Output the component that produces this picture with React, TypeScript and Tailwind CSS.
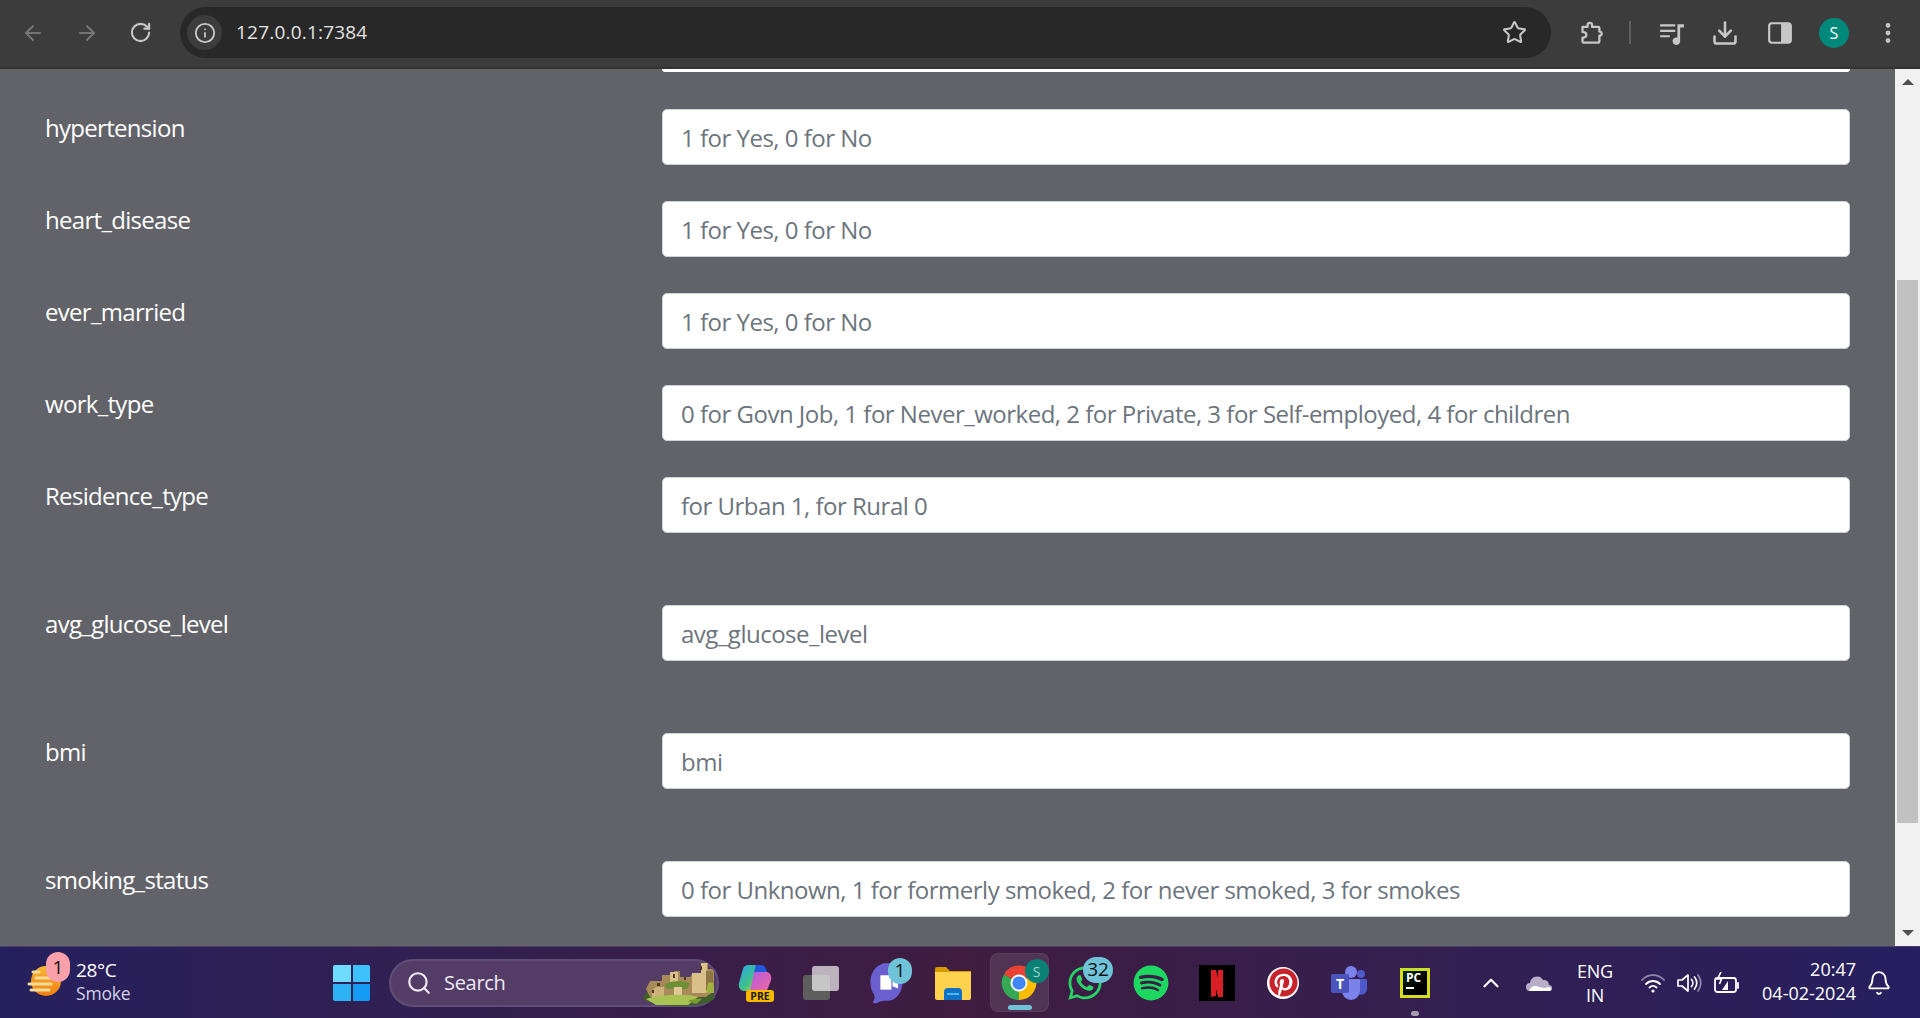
import { ArrowLeft, ArrowRight, RotateCw, Info, Star, Download, MoreVertical, Search, ChevronUp, Bell } from "lucide-react";
import { FaPinterest, FaSpotify, FaWhatsapp } from "react-icons/fa";

const rows = [
  { label: "hypertension", hint: "1 for Yes, 0 for No", gap: "mb-[36px]" },
  { label: "heart_disease", hint: "1 for Yes, 0 for No", gap: "mb-[36px]" },
  { label: "ever_married", hint: "1 for Yes, 0 for No", gap: "mb-[36px]" },
  { label: "work_type", hint: "0 for Govn Job, 1 for Never_worked, 2 for Private, 3 for Self-employed, 4 for children", gap: "mb-[36px]" },
  { label: "Residence_type", hint: "for Urban 1, for Rural 0", gap: "mb-[72px]" },
  { label: "avg_glucose_level", hint: "avg_glucose_level", gap: "mb-[72px]" },
  { label: "bmi", hint: "bmi", gap: "mb-[72px]" },
  { label: "smoking_status", hint: "0 for Unknown, 1 for formerly smoked, 2 for never smoked, 3 for smokes", gap: "" },
];

function Toolbar() {
  return (
    <div className="h-[69px] shrink-0 flex items-center pb-[2px] bg-[#3c3c3c] border-b-2 border-[#333333] text-[#c7c7c7] rounded-t-lg">
      <div className="w-[180px] shrink-0 flex items-center pl-[21px] gap-[30px]">
        <ArrowLeft className="w-6 h-6 text-[#757575]" strokeWidth={2} />
        <ArrowRight className="w-6 h-6 text-[#757575]" strokeWidth={2} />
        <RotateCw className="w-[23px] h-[23px]" strokeWidth={2.2} />
      </div>
      <div className="w-[1371px] h-[51px] shrink-0 rounded-full bg-[#282828] flex items-center pl-[7px] pr-[24px]">
        <div className="w-[35px] h-[35px] rounded-full bg-[#3c3c3c] flex items-center justify-center">
          <Info className="w-[22px] h-[22px]" strokeWidth={2} />
        </div>
        <span className="ml-[14px] text-[19px] text-[#e3e3e3] tracking-[0.2px]">127.0.0.1:7384</span>
        <Star className="w-[25px] h-[25px] ml-auto" strokeWidth={2} />
      </div>
      <div className="flex-1 flex items-center relative h-full">
        <svg viewBox="0 0 24 24" className="w-[27px] h-[27px] ml-[27px]" fill="none" stroke="currentColor" strokeWidth="2" strokeLinejoin="round">
          <path d="M4 7h4.5V5.5a2 2 0 0 1 4 0V7H18a1 1 0 0 1 1 1v3.2h.8a1.9 1.9 0 0 1 0 3.6H19V20a1 1 0 0 1-1 1H5a1 1 0 0 1-1-1v-3.5h1a2.4 2.4 0 0 0 0-4.8H4z" />
        </svg>
        <div className="w-[2px] h-[23px] bg-[#5f5f5f] ml-[24px]" />
        <svg viewBox="0 0 24 24" className="w-[26px] h-[26px] ml-[28px]" fill="currentColor">
          <path d="M1 4h14v2H1zM1 9h14v2H1zM1 14h9v2H1zM17 4h6v3h-3.5v12.5a3.5 3.5 0 1 1-2.5-3.3z" />
        </svg>
        <Download className="w-[28px] h-[28px] ml-[26px]" strokeWidth={2.2} />
        <svg viewBox="0 0 24 24" className="w-[26px] h-[26px] ml-[28px]" fill="none">
          <rect x="2" y="3" width="20" height="18" rx="2.5" stroke="currentColor" strokeWidth="2" />
          <path d="M13 3h7a2 2 0 0 1 2 2v14a2 2 0 0 1-2 2h-7z" fill="currentColor" />
        </svg>
        <div className="w-[30px] h-[30px] ml-[26px] rounded-full bg-[#00897b] flex items-center justify-center text-white text-[16px]">S</div>
        <MoreVertical className="w-[26px] h-[26px] ml-[26px]" strokeWidth={2.4} />
      </div>
    </div>
  );
}

function FormArea() {
  return (
    <div className="flex-1 bg-[#626369] overflow-hidden">
      <div className="ml-[662px] w-[1188px] h-[3px] bg-white rounded-b-[5px] mb-[37px]" />
      {rows.map((r) => (
        <div key={r.label} className={`flex ${r.gap}`}>
          <label className="w-[617px] ml-[45px] pt-[2px] text-[24px] leading-[34px] text-white tracking-[-0.7px] shrink-0">{r.label}</label>
          <div className="w-[1188px] h-[56px] bg-white rounded-[5px] border border-[#ced4da] flex items-center px-[18px] pt-[2px] text-[24px] text-[#6c757d] tracking-[-0.5px] whitespace-nowrap">
            {r.hint}
          </div>
        </div>
      ))}
    </div>
  );
}

function Scrollbar() {
  return (
    <div className="w-[25px] shrink-0 bg-[#f1f1f1] flex flex-col items-center">
      <div className="w-0 h-0 mt-[10px] border-x-[6px] border-x-transparent border-b-[6px] border-b-[#505050]" />
      <div className="w-[21px] h-[543px] mt-[195px] bg-[#c1c1c1]" />
      <div className="w-0 h-0 mt-[107px] border-x-[6px] border-x-transparent border-t-[6px] border-t-[#505050]" />
    </div>
  );
}

function Badge({ text, className }: { text: string; className: string }) {
  return <span className={`absolute flex items-center justify-center rounded-full text-[#111] text-[19px] ${className}`}>{text}</span>;
}

function Weather() {
  return (
    <div className="w-[333px] shrink-0 flex items-center h-full">
      <div className="relative w-[76px] h-full shrink-0">
        <svg viewBox="0 0 36 36" className="absolute left-[27px] top-[17px] w-[36px] h-[36px]">
          <defs>
            <linearGradient id="sun" x1="0" y1="0" x2="0" y2="1">
              <stop offset="0" stopColor="#f7b733" />
              <stop offset="1" stopColor="#ef7f10" />
            </linearGradient>
          </defs>
          <circle cx="19" cy="17" r="15" fill="url(#sun)" />
          <path d="M6 8h6M9 14h17M2 20h22M4 26h18" stroke="#f3dc9a" strokeWidth="3" strokeLinecap="round" />
        </svg>
        <Badge text="1" className="left-[46px] top-[5px] w-[24px] h-[30px] bg-[#f9a0aa]" />
      </div>
      <div className="flex flex-col leading-[23px] mb-[2px]">
        <span className="text-[19px] text-white tracking-[-0.4px]">28°C</span>
        <span className="text-[17.5px] text-[#d3d0e4] tracking-[-0.2px]">Smoke</span>
      </div>
    </div>
  );
}

function Landscape() {
  return (
    <svg viewBox="0 0 74 46" className="absolute right-[1px] top-[0px] w-[74px] h-[46px]">
      <ellipse cx="37" cy="36" rx="36" ry="9" fill="#3f5f2a" />
      <path d="M4 28 8 20h12v-6h12v-4h6v6h10l3-4h9V2h6v6h4l2 2v20l-8 6H8z" fill="#a88a58" />
      <path d="M50 12h9V2h6v30H50zM28 11h8v14h-8z" fill="#d9bf88" />
      <path d="M64 10h5l2 2v18h-7z" fill="#8f7445" />
      <path d="M22 24c7-5 18-5 26-2l-3 6H26z" fill="#6f8f36" />
      <path d="M14 26h8v12H10V30z" fill="#cdb27c" />
      <path d="M32 26h8v10h-8z" fill="#e0c896" />
      <path d="M66 22c3-2 6 0 6 4v6h-8z" fill="#9fb23f" />
      <path d="M4 38c10-4 40-6 52-2l-10 8H14z" fill="#a8c254" />
      <path d="M46 40c5-2 10-3 14-2l-6 5z" fill="#7a9a33" />
      <path d="M15 22h3v3h-3zM58 5h2v4h-2zM31 13h2v4h-2zM10 29h2v3h-2zM42 16h2v3h-2z" fill="#4a3a26" />
    </svg>
  );
}

function Chrome() {
  return (
    <svg viewBox="0 0 36 36" className="w-[36px] h-[36px]">
      <path d="M18 18 3 9.5A17 17 0 0 1 33 9.5z" fill="#ea4335" />
      <path d="M18 18 33 9.5A17 17 0 0 1 18 35z" fill="#fbbc04" />
      <path d="M18 18 18 35A17 17 0 0 1 3 9.5z" fill="#34a853" />
      <circle cx="18" cy="18" r="8.5" fill="#fff" />
      <circle cx="18" cy="18" r="6.6" fill="#4285f4" />
    </svg>
  );
}

function AppIcons() {
  return (
    <div className="flex items-center h-full">
      {/* copilot */}
      <div className="w-[66px] flex justify-center relative">
        <svg viewBox="0 0 34 28" className="w-[34px] h-[28px] -mt-[10px]">
          <defs>
            <linearGradient id="cpa" x1="0" y1="0" x2="1" y2="1">
              <stop offset="0" stopColor="#2aa8f0" />
              <stop offset="0.55" stopColor="#3fc08a" />
              <stop offset="1" stopColor="#f4d02f" />
            </linearGradient>
            <linearGradient id="cpb" x1="0" y1="0" x2="1" y2="1">
              <stop offset="0" stopColor="#b45ae0" />
              <stop offset="1" stopColor="#f06aa0" />
            </linearGradient>
          </defs>
          <path d="M10 1h13l-7 22c-1 3-3 4-6 4H6c-4 0-6-4-5-8l4-14c1-3 3-4 5-4z" fill="url(#cpa)" />
          <path d="M16 8h12c4 0 6 4 5 8l-3 8c-1 3-3 4-6 4H12z" fill="url(#cpb)" />
          <path d="M18 1h5c3 0 5 2 6 7H16z" fill="#2157d8" />
        </svg>
        <span className="absolute left-[24px] top-[16px] w-[28px] h-[12px] rounded-[3px] bg-[#f6b900] text-[#1c1c1c] text-[10.5px] leading-[12px] font-bold text-center">PRE</span>
      </div>
      {/* task view */}
      <div className="w-[66px] flex justify-center">
        <div className="relative w-[36px] h-[34px]">
          <div className="absolute left-0 bottom-0 w-[27px] h-[25px] rounded-[3px] bg-[#5e5e5e]" />
          <div className="absolute right-0 top-0 w-[27px] h-[25px] rounded-[3px] bg-[#f2f2f2]/70" />
        </div>
      </div>
      {/* meet */}
      <div className="w-[66px] flex justify-center relative">
        <svg viewBox="0 0 30 38" className="w-[34px] h-[42px]">
          <path d="M15 1c8 0 14 7 14 17s-6 17-14 17c-3 0-6 0-9 2-2 1-5 0-3-2 1-2 1-4 0-6-2-3-3-7-3-11C0 8 7 1 15 1z" fill="#6a5fcf" />
          <path d="M9 12h10v13H9z" fill="#fff" />
          <path d="M20 15l5-2v11l-5-2z" fill="#fff" />
        </svg>
        <Badge text="1" className="left-[34px] -top-[4px] w-[24px] h-[26px] bg-[#6fc3d8]" />
      </div>
      {/* file explorer */}
      <div className="w-[66px] flex justify-center">
        <svg viewBox="0 0 36 34" className="w-[36px] h-[34px]">
          <path d="M0 3a2 2 0 0 1 2-2h9l4 4h21v6H0z" fill="#d69a00" />
          <path d="M0 6h36v26a2 2 0 0 1-2 2H2a2 2 0 0 1-2-2z" fill="#ffd24d" />
          <path d="M9 34v-8a4 4 0 0 1 4-4h10a4 4 0 0 1 4 4v8z" fill="#0f72c4" />
          <path d="M12 27h12v2H12z" fill="#52b4f2" />
        </svg>
      </div>
      {/* chrome, running */}
      <div className="w-[66px] flex justify-center">
        <div className="relative w-[59px] h-[59px] rounded-lg bg-white/10 border border-white/5 flex items-center justify-center">
          <Chrome />
          <span className="absolute left-[34px] top-[5px] w-[24px] h-[24px] rounded-full bg-[#0b8074] text-[#9fd6cc] text-[14px] flex items-center justify-center">S</span>
          <span className="absolute left-[17px] bottom-[1px] w-[24px] h-[5px] rounded-full bg-[#6fc3d8]" />
        </div>
      </div>
      {/* whatsapp */}
      <div className="w-[66px] flex justify-center relative">
        <FaWhatsapp className="w-[38px] h-[38px] text-[#25d366]" />
        <Badge text="32" className="left-[31px] -top-[7px] w-[30px] h-[26px] bg-[#6fc3d8]" />
      </div>
      <div className="w-[66px] flex justify-center">
        <FaSpotify className="w-[36px] h-[36px] text-[#1ed760]" />
      </div>
      {/* netflix */}
      <div className="w-[66px] flex justify-center">
        <svg viewBox="0 0 36 36" className="w-[36px] h-[36px]">
          <rect width="36" height="36" fill="#000" />
          <path d="M12 5h5v26l-5 1zM19 5h5v27l-5-1zM12 5h5l7 27h-5z" fill="#d81f26" />
        </svg>
      </div>
      <div className="w-[66px] flex justify-center">
        <div className="w-[32px] h-[32px] rounded-full bg-white flex items-center justify-center">
          <FaPinterest className="w-[29px] h-[29px] text-[#c8232c]" />
        </div>
      </div>
      {/* teams */}
      <div className="w-[66px] flex justify-center">
        <div className="relative w-[36px] h-[34px]">
          <svg viewBox="0 0 36 34" className="w-[36px] h-[34px]">
            <circle cx="20" cy="6" r="6" fill="#7b83eb" />
            <circle cx="30" cy="8" r="4" fill="#5059c9" />
            <path d="M25 13h10a1 1 0 0 1 1 1v9a6 6 0 0 1-11 3z" fill="#5059c9" />
            <path d="M11 13h17a1 1 0 0 1 1 1v11a9 9 0 0 1-18 0z" fill="#7b83eb" />
            <rect x="0" y="8" width="18" height="19" rx="2" fill="#4b53bc" />
          </svg>
          <span className="absolute left-0 top-[8px] w-[18px] h-[19px] text-white text-[14px] font-bold flex items-center justify-center">T</span>
        </div>
      </div>
      {/* pycharm */}
      <div className="w-[66px] flex justify-center relative">
        <div className="w-[30px] h-[30px] bg-gradient-to-br from-[#0c2a12] to-black border-[3px] border-[#d7dd1f] border-t-[#c6e02a] flex flex-col pl-[3px]">
          <span className="text-white text-[12px] leading-[13px] font-bold">PC</span>
          <span className="w-[8px] h-[2px] bg-white mt-[3px]" />
        </div>
        <span className="absolute left-[29px] top-[43px] w-[8px] h-[5px] rounded-full bg-[#a79fb0]" />
      </div>
    </div>
  );
}

function Tray() {
  return (
    <div className="ml-auto flex items-center h-full text-white">
      <ChevronUp className="w-[26px] h-[26px]" strokeWidth={2} />
      <svg viewBox="0 0 26 18" className="w-[26px] h-[18px] ml-[22px]">
        <path d="M4 17a4 4 0 0 1 0-8 7 7 0 0 1 13-3 5 5 0 0 1 6 5 3 3 0 0 1 0 6z" fill="#b9aec8" />
        <path d="M3 17c2-5 6-6 10-4l5 1 5-1c3 1 3 4 0 4z" fill="#fff" />
      </svg>
      <div className="w-[60px] ml-[13px] flex flex-col items-center text-[18px] leading-[24px] tracking-[-0.2px]">
        <span>ENG</span>
        <span>IN</span>
      </div>
      <svg viewBox="0 0 24 20" className="w-[24px] h-[20px] ml-[16px]" fill="none" stroke="#fff" strokeWidth="1.8" strokeLinecap="round">
        <path d="M1 7c6-6.5 16-6.5 22 0" stroke="#8f88a8" />
        <path d="M5 11c4-4 10-4 14 0M8.5 14.5c2-2 5-2 7 0" />
        <circle cx="12" cy="18" r="1.6" fill="#fff" stroke="none" />
      </svg>
      <svg viewBox="0 0 26 24" className="w-[26px] h-[24px] ml-[11px]" fill="none" stroke="#fff" strokeWidth="1.7" strokeLinecap="round" strokeLinejoin="round">
        <path d="M2 9v6h4l6 5V4L6 9z" />
        <path d="M15.5 8.5c1.8 2 1.8 5 0 7M18.5 6c3 3.5 3 8.500 0 12" />
        <path d="M22 4c3.500 5 3.500 11 0 16" stroke="#8f88a8" />
      </svg>
      <svg viewBox="0 0 26 22" className="w-[26px] h-[22px] ml-[12px]" fill="none" stroke="#fff" strokeWidth="1.8">
        <rect x="1" y="6" width="21" height="14" rx="2.5" />
        <path d="M24 11v5" strokeLinecap="round" />
        <path d="M8 18l6-9v9z" fill="#fff" stroke="none" />
        <path d="M7 0 3.500 7h4L5.500 12" strokeWidth="1.6" />
      </svg>
      <div className="w-[110px] ml-[6px] flex flex-col items-end text-[18px] leading-[24px] mb-[3px] tracking-[0px]">
        <span>20:47</span>
        <span>04-02-2024</span>
      </div>
      <Bell className="w-[26px] h-[26px] ml-[10px] mr-[28px]" strokeWidth={1.7} />
    </div>
  );
}

function Taskbar() {
  return (
    <div className="h-[72px] shrink-0 flex items-center border-t border-[#4c4066] bg-gradient-to-r from-[#25205e] via-[#3f1c40] to-[#261f60]">
      <Weather />
      <div className="w-[37px] h-[36px] shrink-0 grid grid-cols-2 grid-rows-2 gap-[2px]">
        <div className="rounded-tl-[2px] bg-[#6fdcff]" />
        <div className="rounded-tr-[2px] bg-[#3fc2fb]" />
        <div className="rounded-bl-[2px] bg-[#2eb2f6]" />
        <div className="rounded-br-[2px] bg-[#149cf5]" />
      </div>
      <div className="relative w-[330px] h-[48px] ml-[19px] mr-[3px] shrink-0 rounded-full bg-[#533d66] border-2 border-[#5f4f76] flex items-center pl-[15px] text-[#eee9f3]">
        <Search className="w-[26px] h-[26px]" strokeWidth={2} />
        <span className="ml-[12px] text-[20px] tracking-[-0.3px]">Search</span>
        <Landscape />
      </div>
      <AppIcons />
      <Tray />
    </div>
  );
}

export default function App() {
  return (
    <div className="h-[1018px] w-[1920px] flex flex-col overflow-hidden bg-[#3c3c3c] font-['Open_Sans','Liberation_Sans',sans-serif]">
      <Toolbar />
      <div className="flex-1 flex min-h-0">
        <FormArea />
        <Scrollbar />
      </div>
      <Taskbar />
    </div>
  );
}
